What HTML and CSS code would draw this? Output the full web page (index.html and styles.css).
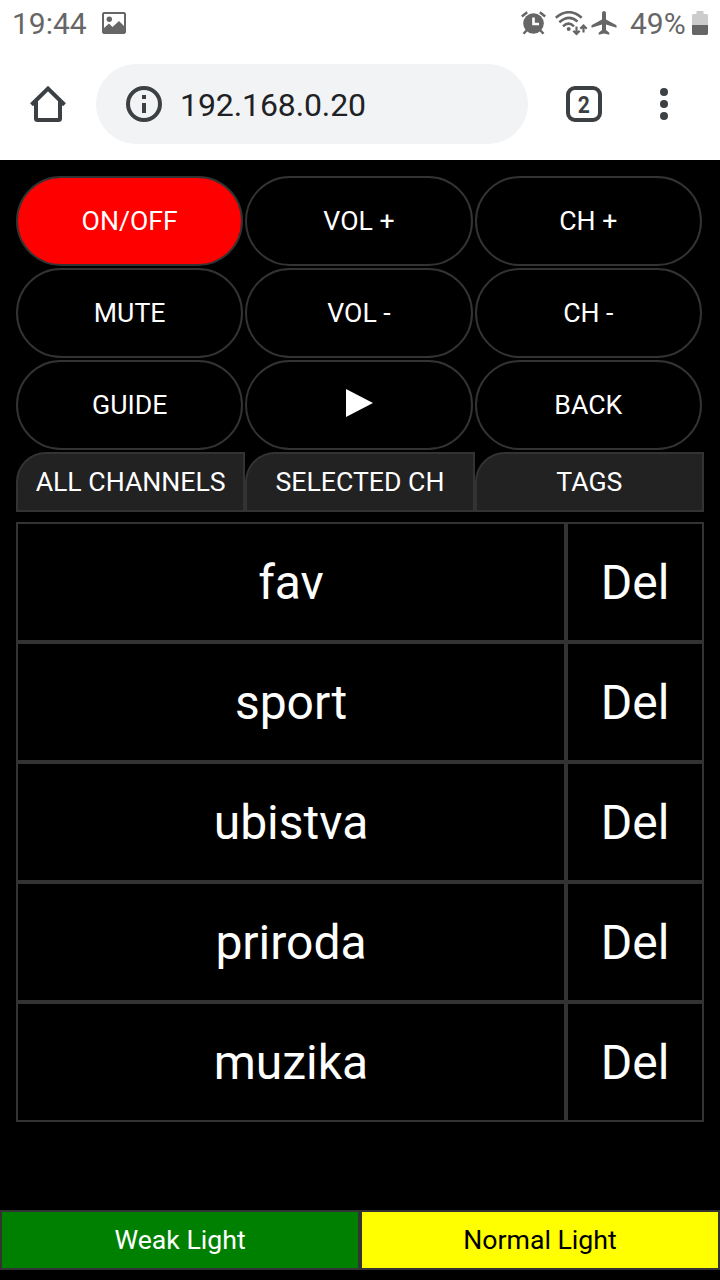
FILE: index.html
```html
<!DOCTYPE html>
<html lang="en">
<head>
<meta charset="utf-8">
<title>192.168.0.20</title>
<link rel="stylesheet" href="styles.css">
</head>
<body>
<header class="status">
  <span class="clock">19:44</span>
  <svg class="photo" width="24" height="22" viewBox="0 0 24 22"><path fill="#666" fill-rule="evenodd" d="M1.500 0H22.500L24 1.500V20.500L22.500 22H1.500L0 20.500V1.500ZM2 2V16L7 11.500L10.500 15L17 9L22 14V2Z"/><circle cx="7.300" cy="7.300" r="2.700" fill="#666"/></svg>
  <svg class="alarm" width="26" height="24" viewBox="0 0 26 24"><path d="M.8 5.500L6.200 1.200M24.200 5.500L18.800 1.200M6 19L2.500 22.800M19 19L22.500 22.800" stroke="#666" stroke-width="2.400" fill="none"/><circle cx="12.500" cy="12.500" r="10.300" fill="#666"/><path d="M12.500 6.500V13H18" stroke="#fff" stroke-width="2.600" fill="none"/></svg>
  <svg class="wifi" width="33" height="25" viewBox="0 0 33 25"><g fill="none" stroke="#666" stroke-width="2.500"><path d="M.8 6.800Q14 -4.500 26.700 6.800M4.300 11.200Q14 2.800 22.500 10.700M8 15.300Q13.500 10 19 15.300"/><path stroke-width="2.200" d="M21.500 15.500V23M18.300 19.700L21.500 23L24.700 19.700M28.500 21.500V14.500M25.300 17.800L28.500 14.500L31.700 17.800"/></g><circle cx="13.700" cy="18" r="2" fill="#666"/></svg>
  <svg class="plane" width="26" height="24" viewBox="0 0 26 24"><path fill="#666" d="M13 0C14.200 0 15 1.200 15 2.500V8.500L25.500 14.200V16.700L15 13.600V19L18.300 21.800V23.700L13 22.500L7.700 23.700V21.800L11 19V13.600L.5 16.700V14.200L11 8.500V2.500C11 1.200 11.800 0 13 0Z"/></svg>
  <span class="percent">49%</span>
  <svg class="battery" width="16" height="24" viewBox="0 0 16 24"><path fill="#ccc" d="M4.500 0H11.500V3H15L16 4V14H0V4L1 3H4.500Z"/><path fill="#666" d="M0 14H16V23L15 24H1L0 23Z"/></svg>
</header>
<nav class="toolbar">
  <svg class="home" width="36" height="36" viewBox="0 0 36 36"><path d="M1.500 18.800L18 2.600L34.500 18.800M6 15V32.500Q6 34 7.500 34H28.500Q30 34 30 32.500V15" fill="none" stroke="#3c4043" stroke-width="4"/></svg>
  <div class="address">
    <svg width="36" height="36" viewBox="0 0 36 36"><circle cx="18" cy="18" r="16" fill="none" stroke="#3c4043" stroke-width="4"/><path fill="#3c4043" d="M16 9H20V13H16ZM16 17H20V27H16Z"/></svg>
    <span>192.168.0.20</span>
  </div>
  <div class="tab-count"><span>2</span></div>
  <svg class="more" width="8" height="32" viewBox="0 0 8 32"><g fill="#3c4043"><circle cx="4" cy="4" r="4"/><circle cx="4" cy="16" r="4"/><circle cx="4" cy="28" r="4"/></g></svg>
</nav>
<main class="page">
  <div class="remote">
    <button class="key power">ON/OFF</button><button class="key">VOL +</button><button class="key">CH +</button>
    <button class="key">MUTE</button><button class="key">VOL -</button><button class="key">CH -</button>
    <button class="key">GUIDE</button><button class="key"><svg class="play" width="27" height="28" viewBox="0 0 27 28"><path fill="#fff" d="M0 0L27 14L0 28Z"/></svg></button><button class="key">BACK</button>
  </div>
  <div class="tabs">
    <button class="tab">ALL CHANNELS</button><button class="tab">SELECTED CH</button><button class="tab">TAGS</button>
  </div>
  <div class="tags">
    <div class="cell">fav</div><div class="cell">Del</div>
    <div class="cell">sport</div><div class="cell">Del</div>
    <div class="cell">ubistva</div><div class="cell">Del</div>
    <div class="cell">priroda</div><div class="cell">Del</div>
    <div class="cell">muzika</div><div class="cell">Del</div>
  </div>
</main>
<footer class="lights">
  <button class="light weak">Weak Light</button><button class="light normal">Normal Light</button>
</footer>
</body>
</html>
```
FILE: styles.css
```css
* { box-sizing: border-box; }
body {
  margin: 0;
  height: 1280px;
  display: flex;
  flex-direction: column;
  background: #000;
  color: #fff;
  font-family: Roboto, sans-serif;
  overflow: hidden;
}
svg { display: block; flex: none; }
button {
  margin: 0;
  padding: 0;
  border: 2px solid #333;
  font: 26.667px Roboto, sans-serif;
  color: #fff;
  background: #000;
  white-space: nowrap;
}
.status {
  height: 48px;
  display: flex;
  align-items: center;
  padding: 0 12px;
  background: #fff;
  color: #666;
  font-size: 30px;
  line-height: 48px;
}
.clock { width: 90px; }
.photo { margin-bottom: 2px; }
.alarm { margin-left: 395px; margin-bottom: 2px; }
.wifi { margin-left: 8px; margin-bottom: 1px; }
.plane { margin-left: 3px; margin-bottom: 2px; }
.percent { margin-left: 13px; width: 62px; }
.battery { margin-bottom: 2px; }
.toolbar {
  height: 112px;
  display: flex;
  align-items: center;
  padding: 0 0 0 30px;
  background: #fff;
}
.address {
  width: 432px;
  height: 80px;
  margin-left: 30px;
  padding-left: 30px;
  display: flex;
  align-items: center;
  gap: 18px;
  border-radius: 40px;
  background: #f1f3f4;
  color: #202124;
  font-size: 32px;
  letter-spacing: -.1px;
}
.address span { padding-top: 2px; }
.tab-count {
  width: 36px;
  height: 36px;
  margin-left: 38px;
  display: flex;
  align-items: center;
  justify-content: center;
  border: 4px solid #3c4043;
  border-radius: 9px;
  color: #3c4043;
  font: 700 24px/28px Roboto, sans-serif;
}
.tab-count span { padding-top: 2px; transform: scaleX(.88); }
.more { margin-left: 58px; }
.page { flex: 1; padding: 16px 16px 0; }
.remote {
  display: grid;
  grid-template-columns: repeat(3, 1fr);
  grid-auto-rows: 90px;
  row-gap: 2px;
}
.key {
  display: flex;
  align-items: center;
  justify-content: center;
  margin-right: 2px;
  border-radius: 45px;
}
.power { background: #f00; }
.play { margin: 0 0 4px 1px; }
.tabs {
  display: grid;
  grid-template-columns: repeat(3, 1fr);
  height: 60px;
  margin-top: 2px;
}
.tab { background: #222; border-radius: 30px 0 0 0; }
.tags {
  display: grid;
  grid-template-columns: 550px 138px;
  grid-auto-rows: 120px;
  margin-top: 10px;
}
.cell {
  display: flex;
  align-items: center;
  justify-content: center;
  border: 2px solid #333;
  font-size: 48px;
}
.lights {
  display: grid;
  grid-template-columns: 1fr 1fr;
  height: 60px;
  margin-bottom: 10px;
}
.weak { background: #008000; }
.normal { background: #ff0; color: #000; }
```
